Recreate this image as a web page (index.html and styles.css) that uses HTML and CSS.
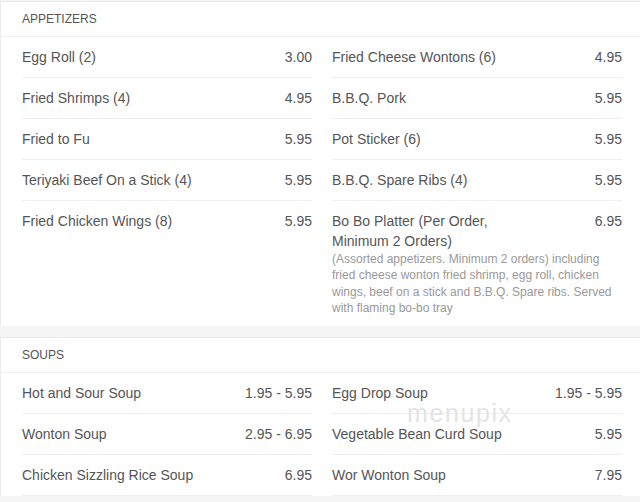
FILE: index.html
```html
<!DOCTYPE html>
<html lang="en">
<head>
    <meta charset="UTF-8">
    <meta name="viewport" content="width=device-width, initial-scale=1.0">
    <title>Menu</title>
    <link rel="stylesheet" href="styles.css">
</head>
<body>
<div class="menu">
    <div class="menu-section">
        <div class="section-title">APPETIZERS</div>
        <div class="items">
            <div class="item"><div class="item-head"><span class="name">Egg Roll (2)</span><span class="price">3.00</span></div></div>
            <div class="item"><div class="item-head"><span class="name">Fried Cheese Wontons (6)</span><span class="price">4.95</span></div></div>
            <div class="item"><div class="item-head"><span class="name">Fried Shrimps (4)</span><span class="price">4.95</span></div></div>
            <div class="item"><div class="item-head"><span class="name">B.B.Q. Pork</span><span class="price">5.95</span></div></div>
            <div class="item"><div class="item-head"><span class="name">Fried to Fu</span><span class="price">5.95</span></div></div>
            <div class="item"><div class="item-head"><span class="name">Pot Sticker (6)</span><span class="price">5.95</span></div></div>
            <div class="item"><div class="item-head"><span class="name">Teriyaki Beef On a Stick (4)</span><span class="price">5.95</span></div></div>
            <div class="item"><div class="item-head"><span class="name">B.B.Q. Spare Ribs (4)</span><span class="price">5.95</span></div></div>
            <div class="item last"><div class="item-head"><span class="name">Fried Chicken Wings (8)</span><span class="price">5.95</span></div></div>
            <div class="item last">
                <div class="item-head"><span class="name">Bo Bo Platter (Per Order, Minimum 2 Orders)</span><span class="price">6.95</span></div>
                <div class="desc">(Assorted appetizers. Minimum 2 orders) including fried cheese wonton fried shrimp, egg roll, chicken wings, beef on a stick and B.B.Q. Spare ribs. Served with flaming bo-bo tray</div>
            </div>
        </div>
    </div>

    <div class="menu-section">
        <div class="section-title">SOUPS</div>
        <div class="items">
            <div class="item"><div class="item-head"><span class="name">Hot and Sour Soup</span><span class="price">1.95 - 5.95</span></div></div>
            <div class="item"><div class="item-head"><span class="name">Egg Drop Soup</span><span class="price">1.95 - 5.95</span></div></div>
            <div class="item"><div class="item-head"><span class="name">Wonton Soup</span><span class="price">2.95 - 6.95</span></div></div>
            <div class="item"><div class="item-head"><span class="name">Vegetable Bean Curd Soup</span><span class="price">5.95</span></div></div>
            <div class="item"><div class="item-head"><span class="name">Chicken Sizzling Rice Soup</span><span class="price">6.95</span></div></div>
            <div class="item"><div class="item-head"><span class="name">Wor Wonton Soup</span><span class="price">7.95</span></div></div>
        </div>
    </div>
</div>
<div class="watermark">menupix</div>
</body>
</html>
```

FILE: styles.css
```css
body {
    margin: 0;
    padding-top: 1px;
    background: #f5f5f5;
    font-family: "Liberation Sans", Arial, sans-serif;
    color: #555;
}
.menu-section {
    background: #fff;
    border-top: 1px solid #e8e8e8;
    border-left: 1px solid #ececec;
    margin-bottom: 11px;
}
.section-title {
    height: 34px;
    line-height: 34px;
    padding-left: 21px;
    font-size: 12px;
    color: #555;
    border-bottom: 1px solid #eee;
}
.items {
    display: grid;
    grid-template-columns: 290px 290px;
    column-gap: 20px;
    padding: 0 18px 0 21px;
}
.item {
    padding: 10px 0;
    border-bottom: 1px solid #eee;
}
.item.last {
    border-bottom: none;
}
.item-head {
    display: flex;
    justify-content: space-between;
    font-size: 14px;
    line-height: 20px;
}
.name {
    width: 70%;
}
.price {
    text-align: right;
    white-space: nowrap;
}
.desc {
    font-size: 12px;
    line-height: 16.3px;
    color: #999;
}
.watermark {
    position: absolute;
    left: 407px;
    top: 400px;
    font-size: 25px;
    line-height: 26px;
    color: #e4e4e4;
    letter-spacing: 1.6px;
}
```
